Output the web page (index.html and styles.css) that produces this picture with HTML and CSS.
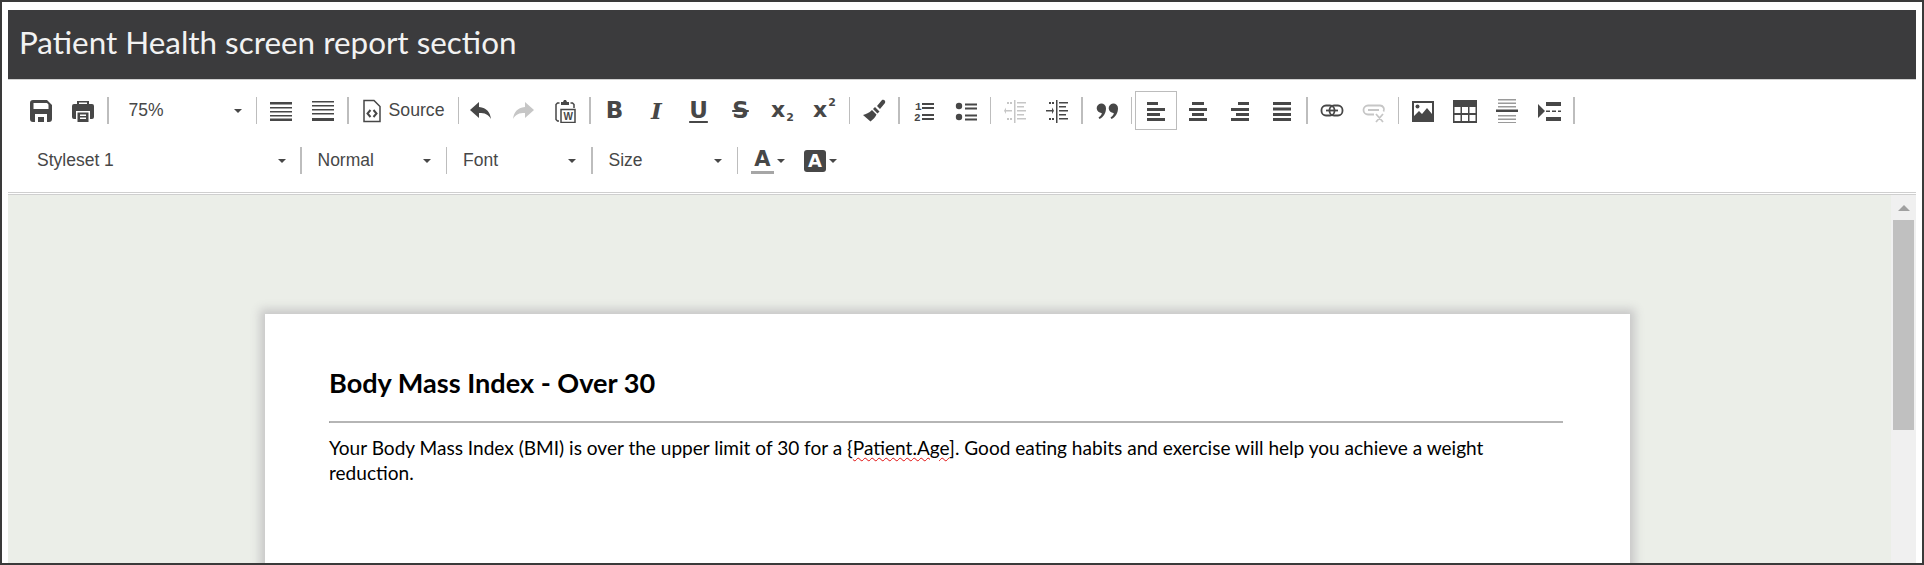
FILE: index.html
```html
<!DOCTYPE html>
<html lang="en">
<head>
<meta charset="utf-8">
<title>Patient Health screen report section</title>
<link rel="stylesheet" href="styles.css">
</head>
<body>
<div class="frame">
  <h1 class="title">Patient Health screen report section</h1>
  <div class="toolbar">
    <div class="row">
      <button class="btn"><svg viewBox="0 0 24 24"><path fill-rule="evenodd" d="M4 1h14l5 5v14a3 3 0 0 1-3 3H4a3 3 0 0 1-3-3V4a3 3 0 0 1 3-3zM4.500 4v6h15V5.500L18 4zM6 15v8h3v-5h6v5h3v-8z"/></svg></button>
      <button class="btn"><svg viewBox="0 0 24 24"><path fill-rule="evenodd" d="M6 2h12v3h3a2 2 0 0 1 2 2v11a2 2 0 0 1-2 2h-2v-8H5v8H3a2 2 0 0 1-2-2V7a2 2 0 0 1 2-2h3zm2 1.500V5h8V3.500z"/><path fill-rule="evenodd" d="M6.500 13.500h11V23h-11zM9 15.500V17h6v-1.500zM9 18.500V20h6v-1.500z"/></svg></button>
      <span class="sep"></span>
      <div class="combo combo-zoom"><span>75%</span><i class="arrow"></i></div>
      <span class="sep"></span>
      <button class="btn"><svg viewBox="0 0 24 24"><path d="M1 3h22v2.500H1zM1 8h22v1.500H1zM1 12h22v1.500H1zM1 16h22v1.500H1zM1 19.500h22V22H1z"/></svg></button>
      <button class="btn"><svg viewBox="0 0 24 24"><path d="M1 2h22v1.500H1zM1 6h22v1.500H1zM1 10h22v1.500H1zM1 14h22v1.500H1zM1 19h22v3H1z"/></svg></button>
      <span class="sep"></span>
      <button class="btn btn-source"><svg class="ico-source" viewBox="0 0 20 24"><path fill="none" stroke="currentColor" stroke-width="1.500" d="M2 1.500h10l6 6v15H2z"/><path fill="none" stroke="currentColor" stroke-width="2" d="M8.500 11l-3 3.500 3 3.500M11.500 11l3 3.500-3 3.500"/></svg><span>Source</span></button>
      <span class="sep"></span>
      <div class="group-tight">
        <button class="btn"><svg viewBox="0 0 24 24"><path d="M10 3L1 11l9 8v-5c6 0 9 1 12 6-1-7-4-11-12-12z"/></svg></button>
        <button class="btn off"><svg viewBox="0 0 24 24"><path d="M14 3l9 8-9 8v-5c-6 0-9 1-12 6 1-7 4-11 12-12z"/></svg></button>
        <button class="btn"><svg viewBox="0 0 24 24"><path fill="none" stroke="currentColor" stroke-width="1.500" d="M6.500 4H4.500L3 5.500v15L4.500 22H6M17.500 4h2l1.500 1.500V9"/><path d="M8 3h2l1-2h2l1 2h2v3H8z"/><path fill="none" stroke="currentColor" stroke-width="1.500" d="M8 10.500h14v13H8z"/><text class="svg-w" x="10.500" y="21">W</text></svg></button>
      </div>
      <span class="sep"></span>
      <button class="btn tx">B</button>
      <button class="btn tx tx-i">I</button>
      <button class="btn tx tx-u">U</button>
      <button class="btn tx tx-s">S</button>
      <button class="btn tx tx-x">x<sub>2</sub></button>
      <button class="btn tx tx-x">x<sup>2</sup></button>
      <span class="sep"></span>
      <button class="btn"><svg viewBox="0 0 24 24"><path d="M15 7l3 3 5-6c1-2-1-4-3-3zM13 8l4.500 4.500-2 2L11 10zM10 11l4.500 4.500c-1 3-4 5-6 7L1 16c3-1 6-2 9-5z"/></svg></button>
      <span class="sep"></span>
      <button class="btn"><svg viewBox="0 0 24 24"><text class="svg-num" x="3" y="11">1</text><text class="svg-num" x="2" y="22">2</text><path d="M10 4h12v2H10zM10 8h12v2H10zM10 15h12v2H10zM10 19h12v2H10z"/></svg></button>
      <button class="btn"><svg viewBox="0 0 24 24"><circle cx="5" cy="7" r="3.200"/><circle cx="5" cy="18" r="3.200"/><path d="M11 4.500h12v2H11zM11 8.500h12v2H11zM11 15.500h12v2H11zM11 19.500h12v2H11z"/></svg></button>
      <span class="sep"></span>
      <button class="btn off"><svg viewBox="0 0 24 24"><path d="M11 1h1.500v23H11zM14 3h9v1.500h-9zM14 7h7v1.500h-7zM14 11h9v1.500h-9zM14 15h7v1.500h-7zM14 19h9v1.500h-9zM9 11H3V8.500l-2 3.300 2 3.200V12.500h6zM4 3h2v2H4zM7 3h2v2H7zM4 19h2v2H4zM7 19h2v2H7z"/></svg></button>
      <button class="btn"><svg viewBox="0 0 24 24"><path d="M11 1h1.500v23H11zM14 3h9v1.500h-9zM14 7h7v1.500h-7zM14 11h9v1.500h-9zM14 15h7v1.500h-7zM14 19h9v1.500h-9zM1 11h6V8.500l2 3.300-2 3.200V12.500H1zM4 3h2v2H4zM7 3h2v2H7zM4 19h2v2H4zM7 19h2v2H7z"/></svg></button>
      <span class="sep"></span>
      <button class="btn"><svg viewBox="0 0 24 24"><path d="M6 4.500a4.700 4.700 0 0 1 5 4.700c0 4.800-2.500 8.800-6.500 10.800l-1-1.500c2-1.300 3-2.600 3.300-4.600A4.600 4.600 0 0 1 6 4.500zM18 4.500a4.700 4.700 0 0 1 5 4.700c0 4.800-2.500 8.800-6.500 10.800l-1-1.500c2-1.300 3-2.600 3.300-4.600a4.600 4.600 0 0 1-.8-9.400z"/></svg></button>
      <span class="sep"></span>
      <button class="btn active"><svg viewBox="0 0 24 24"><path d="M3 3h11v3H3zM3 9h18v3H3zM3 14h13v3H3zM3 19h18v3H3z"/></svg></button>
      <button class="btn"><svg viewBox="0 0 24 24"><path d="M6 3h12v3H6zM3 9h18v3H3zM6 14h12v3H6zM3 19h18v3H3z"/></svg></button>
      <button class="btn"><svg viewBox="0 0 24 24"><path d="M10 3h11v3H10zM3 9h18v3H3zM8 14h13v3H8zM3 19h18v3H3z"/></svg></button>
      <button class="btn"><svg viewBox="0 0 24 24"><path d="M3 3h18v3H3zM3 8.500h18v3H3zM3 14h18v3H3zM3 19h18v3H3z"/></svg></button>
      <span class="sep"></span>
      <button class="btn"><svg viewBox="0 0 24 24"><g fill="none" stroke="currentColor" stroke-width="1.800"><rect x="1.500" y="6.500" width="13" height="10" rx="4.500"/><rect x="9.500" y="6.500" width="13" height="10" rx="4.500"/><path d="M6 11.500h12"/></g></svg></button>
      <button class="btn off"><svg viewBox="0 0 24 24"><path fill="none" stroke="currentColor" stroke-width="1.800" d="M12 15.500H6a4 4 0 0 1 0-9h12a4 4 0 0 1 3.500 6M6 11h11M14 15l7 8M21 15l-7 8"/></svg></button>
      <span class="sep"></span>
      <button class="btn"><svg viewBox="0 0 24 24"><path fill-rule="evenodd" d="M1 2h22v21H1zM3 4v13l5-5 3 3 5-6 5 6V4z"/><circle cx="6.500" cy="7.500" r="2"/></svg></button>
      <button class="btn"><svg viewBox="0 0 24 24"><path fill-rule="evenodd" d="M0 1h24v23H0zM1.500 8v6h6V8zM9 8v6h6V8zM16.500 8v6h6V8zM1.500 16v6h6v-6zM9 16v6h6v-6zM16.500 16v6h6v-6z"/></svg></button>
      <button class="btn"><svg viewBox="0 0 24 24"><path class="lite" d="M3 0h18v1.500H3zM3 3.500h18V5H3zM3 7h18v1.500H3zM3 16h18v1.500H3zM3 19.500h18V21H3zM3 23h18v1.500H3z"/><path d="M1 10.500h22v2.500H1z"/></svg></button>
      <button class="btn"><svg viewBox="0 0 24 24"><path d="M1 5l7 7-7 7zM9 3h15v4H9zM9 11.500h4v1.500H9zM15 11.500h4v1.500h-4zM21 11.500h3v1.500h-3zM9 18h15v4H9z"/></svg></button>
      <span class="sep"></span>
    </div>
    <div class="row">
      <div class="combo combo-style"><span>Styleset 1</span><i class="arrow"></i></div>
      <span class="sep"></span>
      <div class="combo combo-std"><span>Normal</span><i class="arrow"></i></div>
      <span class="sep"></span>
      <div class="combo combo-std"><span>Font</span><i class="arrow"></i></div>
      <span class="sep"></span>
      <div class="combo combo-std"><span>Size</span><i class="arrow"></i></div>
      <span class="sep"></span>
      <button class="btn-color btn-fore"><span class="a-fore">A</span><i class="arrow"></i></button>
      <button class="btn-color"><span class="a-back">A</span><i class="arrow"></i></button>
    </div>
  </div>
  <div class="editor">
    <div class="canvas">
      <div class="page">
        <h2 class="doc-title">Body Mass Index - Over 30</h2>
        <hr class="doc-rule">
        <p class="doc-text">Your Body Mass Index (BMI) is over the upper limit of 30 for a {<span class="typo">Patient.Age</span>]. Good eating habits and exercise will help you achieve a weight reduction.</p>
      </div>
    </div>
    <div class="scrollbar">
      <i class="scroll-up"></i>
      <div class="scroll-thumb"></div>
    </div>
  </div>
</div>
</body>
</html>
```
FILE: styles.css
```css
* { box-sizing: border-box; }
html, body { margin: 0; height: 100%; overflow: hidden; background: #fff; }
.frame {
  width: 1924px;
  height: 565px;
  border: 2px solid #3a3a3a;
  padding: 8px 6px 0;
  display: flex;
  flex-direction: column;
  overflow: hidden;
  background: #fff;
}
.title {
  margin: 0;
  height: 70px;
  flex: none;
  background: #3b3b3d;
  border-bottom: 1px solid #d0d0d0;
  color: #f2f2f2;
  font: 400 31.400px/64px "Lato", sans-serif;
  padding-left: 11px;
}
.toolbar {
  flex: none;
  height: 113px;
  padding: 11px 0 0 12px;
  border-bottom: 1px solid #cfcfcf;
  box-shadow: 0 1px 0 #fff, 0 2px 0 #cfcfcf;
  margin-bottom: 2px;
  color: #474747;
  font-family: "Liberation Sans", Arial, sans-serif;
}
.row {
  display: flex;
  align-items: center;
  height: 39px;
  margin-bottom: 11px;
}
.btn {
  width: 42px;
  height: 39px;
  flex: none;
  padding: 0;
  border: 1px solid transparent;
  background: none;
  color: #474747;
  display: flex;
  align-items: center;
  justify-content: center;
  font-family: "Liberation Sans", Arial, sans-serif;
}
.btn svg { width: 24px; height: 24px; fill: currentColor; display: block; }
.btn .lite { fill: #9a9a9a; }
.svg-num { font: 700 11px "Liberation Mono", monospace; }
.svg-w { font: 700 10px "Liberation Sans", sans-serif; }
.off { color: #c6c6c6; }
.active { border-color: #bcbcbc; }
.sep {
  width: 1.5px;
  height: 27px;
  flex: none;
  margin: 0 3px;
  background: #bdbdbd;
}
.group-tight { display: flex; margin-left: -2px; }
.btn-source { width: 103px; justify-content: flex-start; padding-left: 9px; font-size: 17.700px; gap: 7px; }
.btn-source .ico-source { width: 20px; }
.tx { font: 700 23px/1 "DejaVu Sans", sans-serif; }
.tx-i { font: italic 700 23px/1 "DejaVu Serif", serif; }
.tx-u { text-decoration: underline; text-decoration-thickness: 2px; text-underline-offset: 3px; }
.tx-s { text-decoration: line-through; text-decoration-thickness: 2px; }
.tx-x { font-size: 22px; padding-bottom: 2px; }
.tx-x sub, .tx-x sup { font-size: 11px; line-height: 11px; margin-left: 1px; }
.tx-x sub { margin-top: 16px; }
.tx-x sup { margin-bottom: 14px; }
.combo {
  height: 39px;
  flex: none;
  display: flex;
  align-items: center;
  justify-content: space-between;
  font-size: 17.5px;
  padding-left: 17px;
  padding-right: 11px;
}
.combo-zoom { width: 141px; }
.combo-style { width: 277px; }
.combo-std { width: 138px; padding-left: 13px; padding-right: 12px; }
.arrow {
  display: block;
  width: 0;
  height: 0;
  flex: none;
  border-left: 4.500px solid transparent;
  border-right: 4.500px solid transparent;
  border-top: 4.500px solid #474747;
}
.btn-color {
  width: 50px;
  height: 39px;
  flex: none;
  padding: 0 0 0 10px;
  border: 0;
  background: none;
  display: flex;
  align-items: center;
  gap: 3px;
  color: #474747;
  font-family: "DejaVu Sans", sans-serif;
}
.btn-fore { width: 53px; }
.a-fore {
  width: 23px;
  font-size: 21px;
  font-weight: 700;
  line-height: 24px;
  text-align: center;
  border-bottom: 3px solid #a6a6a6;
}
.a-back {
  width: 22px;
  height: 22px;
  background: #474747;
  color: #fff;
  border-radius: 3px;
  font-size: 18px;
  font-weight: 700;
  line-height: 22px;
  text-align: center;
}
.editor { flex: 1; min-height: 0; display: flex; }
.canvas { flex: 1; min-width: 0; background: #ebeee8; overflow: hidden; padding: 119px 0 0 257px; }
.page {
  width: 1365px;
  height: 600px;
  background: #fff;
  box-shadow: 0 0 9px 5px #c8c8c8;
  padding: 52px 67px 0 64px;
  color: #000;
  font-family: "Lato", sans-serif;
}
.doc-title {
  margin: 0;
  font-size: 27.100px;
  font-weight: 700;
  line-height: 33px;
}
.doc-rule {
  margin: 22px 0 0;
  border: 0;
  border-top: 2px solid #b5b5b5;
  border-left: 1px solid #999;
  height: 2px;
}
.doc-text {
  margin: 12px 0 0;
  padding-right: 30px;
  font-size: 19.070px;
  line-height: 25px;
}
.typo {
  text-decoration: underline wavy #e01010 1px;
  text-underline-offset: 2px;
}
.scrollbar {
  width: 25px;
  flex: none;
  background: #f0f0f0;
  padding: 10px 2px 0;
  display: flex;
  flex-direction: column;
  align-items: center;
}
.scroll-up {
  display: block;
  width: 0;
  height: 0;
  border-left: 6px solid transparent;
  border-right: 6px solid transparent;
  border-bottom: 6px solid #a0a0a0;
  margin-bottom: 9px;
}
.scroll-thumb { width: 21px; height: 210px; background: #c0c0c0; }
```
